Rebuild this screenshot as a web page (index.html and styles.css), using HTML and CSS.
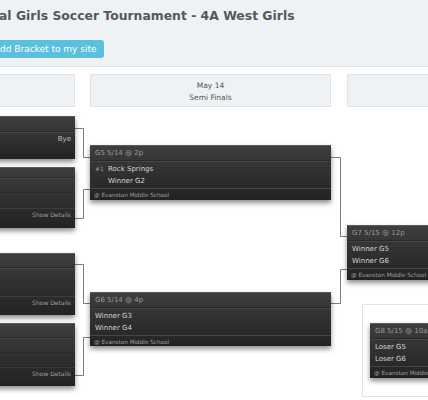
FILE: index.html
```html
<!DOCTYPE html>
<html>
<head>
<meta charset="utf-8">
<link rel="stylesheet" href="styles.css">
</head>
<body>
<header class="top">
  <h1 class="title">al Girls Soccer Tournament - 4A West Girls</h1>
  <a class="btn-add">Add Bracket to my site</a>
</header>

<svg class="lines" width="428" height="400" viewBox="0 0 428 400">
  <g fill="none" stroke="#7b7b7b" stroke-width="1">
    <polyline points="75,128.5 83.5,128.5 83.5,157.5 90,157.5"/>
    <polyline points="75,218.5 83.5,218.5 83.5,189.5 90,189.5"/>
    <polyline points="75,264.5 83.5,264.5 83.5,303.5 90,303.5"/>
    <polyline points="75,375.5 83.5,375.5 83.5,337.5 90,337.5"/>
    <polyline points="331,157.5 340.5,157.5 340.5,236.5 347,236.5"/>
    <polyline points="331,303.5 340.5,303.5 340.5,269.5 347,269.5"/>
  </g>
</svg>

<main class="bracket">
  <section class="round r1">
    <div class="round-head"><span></span><span></span></div>
    <div class="game g-bye">
      <div class="g-head"></div>
      <div class="g-row right">Bye</div>
      <div class="g-row"></div>
    </div>
    <div class="game g-first">
      <div class="g-head small"></div>
      <div class="g-row tall"></div>
      <div class="g-row tall"></div>
      <div class="g-foot right">Show Details</div>
    </div>
    <div class="game g-first g3">
      <div class="g-head"></div>
      <div class="g-row tall"></div>
      <div class="g-row tall"></div>
      <div class="g-foot right">Show Details</div>
    </div>
    <div class="game g-first g4">
      <div class="g-head"></div>
      <div class="g-row tall"></div>
      <div class="g-row tall"></div>
      <div class="g-foot right">Show Details</div>
    </div>
  </section>

  <section class="round r2">
    <div class="round-head"><span>May 14</span><span>Semi Finals</span></div>
    <div class="game g5">
      <div class="g-head">G5 5/14 @ 2p</div>
      <div class="g-teams">
        <div class="team"><span class="seed">#1</span>Rock Springs</div>
        <div class="team"><span class="seed"></span>Winner G2</div>
      </div>
      <div class="g-foot">@ Evanston Middle School</div>
    </div>
    <div class="game g6">
      <div class="g-head">G6 5/14 @ 4p</div>
      <div class="g-teams">
        <div class="team">Winner G3</div>
        <div class="team">Winner G4</div>
      </div>
      <div class="g-foot">@ Evanston Middle School</div>
    </div>
  </section>

  <section class="round r3">
    <div class="round-head"><span></span><span></span></div>
    <div class="game g7">
      <div class="g-head">G7 5/15 @ 12p</div>
      <div class="g-teams">
        <div class="team">Winner G5</div>
        <div class="team">Winner G6</div>
      </div>
      <div class="g-foot">@ Evanston Middle School</div>
    </div>
    <div class="consolation">
      <div class="game g8">
        <div class="g-head">G8 5/15 @ 10a</div>
        <div class="g-teams">
          <div class="team">Loser G5</div>
          <div class="team">Loser G6</div>
        </div>
        <div class="g-foot">@ Evanston Middle School</div>
      </div>
    </div>
  </section>
</main>
</body>
</html>
```

FILE: styles.css
```css
* { box-sizing: border-box; }
html, body {
  margin: 0;
  padding: 0;
  width: 428px;
  height: 400px;
  overflow: hidden;
  background: #ffffff;
  font-family: "DejaVu Sans", Verdana, sans-serif;
}
body { position: relative; }

.top {
  height: 67px;
  background: #eef2f5;
  border-bottom: 1px solid #dde2e6;
  padding-top: 8px;
}
.title {
  margin: 0 0 0 -1px;
  font-size: 12.4px;
  line-height: 15px;
  font-weight: bold;
  color: #575757;
  white-space: nowrap;
}
.btn-add {
  display: inline-block;
  margin: 17px 0 0 -14px;
  height: 18px;
  padding: 0 7px 0 8px;
  background: #5bc0de;
  border-radius: 3px;
  color: #ffffff;
  font-size: 9px;
  line-height: 18px;
  white-space: nowrap;
}

.lines {
  position: absolute;
  left: 0;
  top: 0;
  z-index: 0;
}

.bracket {
  display: flex;
  gap: 15px;
  margin-left: -166px;
  padding-top: 7px;
  position: relative;
  z-index: 1;
}
.round {
  width: 241px;
  flex: none;
  display: flex;
  flex-direction: column;
}
.r3 { margin-left: 1px; }

.round-head {
  height: 33px;
  background: #eef2f5;
  border: 1px solid #dfe4e8;
  display: flex;
  flex-direction: column;
  align-items: center;
  padding-top: 5px;
  font-size: 7.5px;
  line-height: 12px;
  color: #555555;
}

.game {
  background: linear-gradient(#3e3e3e, #232323);
  border-top: 1px solid #5a5a5a;
  box-shadow: 0 3px 5px rgba(0, 0, 0, 0.45);
  color: #dddddd;
  display: flex;
  flex-direction: column;
}
.g-head {
  height: 15px;
  line-height: 14px;
  font-size: 7px;
  color: #9a9a9a;
  padding-left: 5px;
  border-bottom: 1px solid #2a2a2a;
  box-shadow: 0 1px 0 #454545;
  white-space: nowrap;
}
.g-bye .g-head { height: 16px; }
.g-head.small { height: 10px; }
.g-row {
  height: 14px;
  line-height: 14px;
  font-size: 7px;
  color: #bdbdbd;
  padding-right: 4px;
}
.g-row.tall {
  height: 15px;
  border-bottom: 1px solid #2a2a2a;
}
.right { text-align: right; }
.g-teams {
  padding: 2px 0 1px 5px;
}
.team {
  height: 12px;
  line-height: 12px;
  font-size: 7px;
  color: #d6d6d6;
  white-space: nowrap;
}
.seed {
  display: inline-block;
  width: 13px;
  font-size: 6px;
  color: #9a9a9a;
}
.g-foot {
  height: 13px;
  line-height: 12px;
  font-size: 5.7px;
  color: #a0a0a0;
  padding: 0 4px;
  border-top: 1px solid #454545;
  white-space: nowrap;
}
.g-first .g-foot {
  border-top: 1px solid #3c3c3c;
  height: 20px;
  line-height: 11px;
  padding-top: 0;
  font-size: 6px;
}

.g-bye { margin-top: 9px; height: 43px; }
.g-first { margin-top: 8px; height: 61px; }
.g3 { margin-top: 25px; height: 62px; }
.g4 { margin-top: 8px; height: 63px; }

.g5 { margin-top: 38px; height: 55px; }
.g6 { margin-top: 92px; height: 54px; }
.g7 { margin-top: 118px; height: 55px; }

.consolation {
  margin: 24px 0 0 15px;
  height: 93px;
  background: #ffffff;
  border: 1px solid #dfe4e8;
  padding: 18px 0 0 7px;
}
.g8 { height: 55px; }
```
